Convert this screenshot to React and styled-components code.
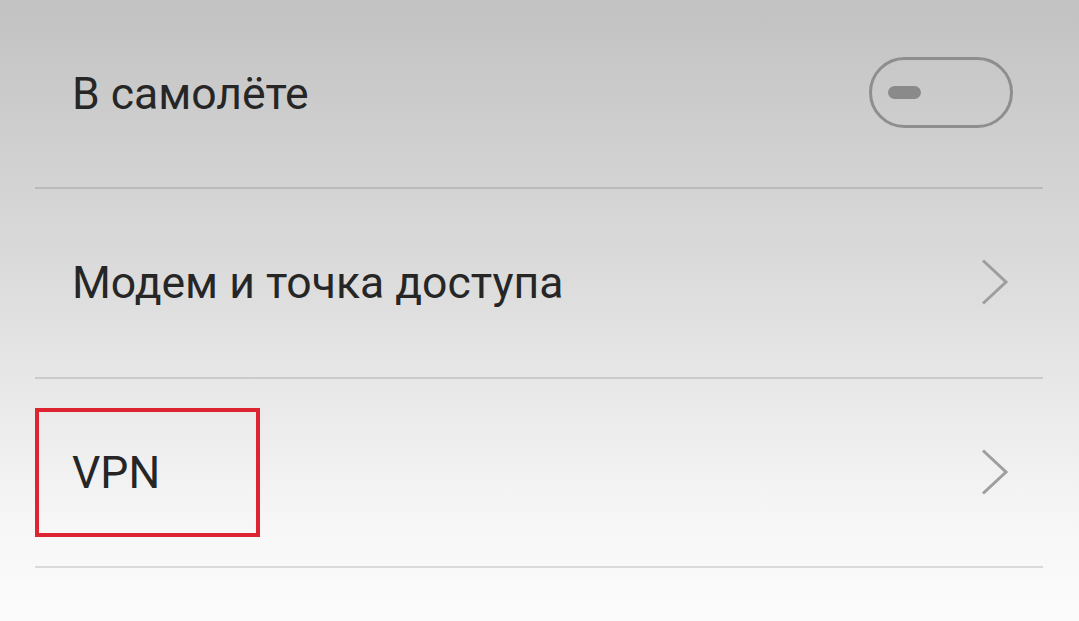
import React from "react";
import styled, { createGlobalStyle } from "styled-components";

const GlobalStyle = createGlobalStyle`
  html, body {
    margin: 0;
    padding: 0;
  }
  body {
    font-family: Roboto, "Noto Sans", sans-serif;
  }
`;

const Screen = styled.div`
  width: 1079px;
  height: 621px;
  overflow: hidden;
  background: linear-gradient(180deg, #c2c2c2 0%, #dcdcdc 45%, #f7f7f7 85%, #fbfbfb 100%);
  padding: 0 36px 0 35px;
  box-sizing: border-box;
`;

const Row = styled.div`
  display: flex;
  align-items: center;
  justify-content: space-between;
  height: ${(p) => p.$h}px;
  box-sizing: border-box;
  border-bottom: 2px solid rgba(0, 0, 0, 0.12);
  position: relative;
`;

const Label = styled.span`
  font-size: 44.5px;
  color: #262626;
  padding-left: 37px;
`;

const Highlight = styled.div`
  position: absolute;
  left: 0;
  top: 29px;
  width: 225px;
  height: 129px;
  border: 4px solid #dc2530;
  box-sizing: border-box;
`;

const Toggle = styled.div`
  width: 144px;
  height: 71px;
  box-sizing: border-box;
  border: 3px solid #8e8e8e;
  border-radius: 36px;
  display: flex;
  align-items: center;
  padding-left: 16px;
  margin-right: 30px;
  margin-bottom: 3px;
`;

const Knob = styled.div`
  width: 33px;
  height: 13px;
  border-radius: 7px;
  background: #8a8a8a;
`;

const Chevron = styled.svg`
  width: 28px;
  height: 46px;
  margin-right: 34px;
  margin-bottom: 2px;
`;

const Arrow = () => (
  <Chevron viewBox="0 0 28 46">
    <path d="M2 1.5 L25 23 L2 44.5" fill="none" stroke="#9e9e9e" strokeWidth="3" />
  </Chevron>
);

const App = () => {
  return (
    <>
      <GlobalStyle />
      <Screen>
        <Row $h={189}>
          <Label>В самолёте</Label>
          <Toggle>
            <Knob />
          </Toggle>
        </Row>
        <Row $h={190}>
          <Label>Модем и точка доступа</Label>
          <Arrow />
        </Row>
        <Row $h={189}>
          <Highlight />
          <Label>VPN</Label>
          <Arrow />
        </Row>
      </Screen>
    </>
  );
};

export default App;
